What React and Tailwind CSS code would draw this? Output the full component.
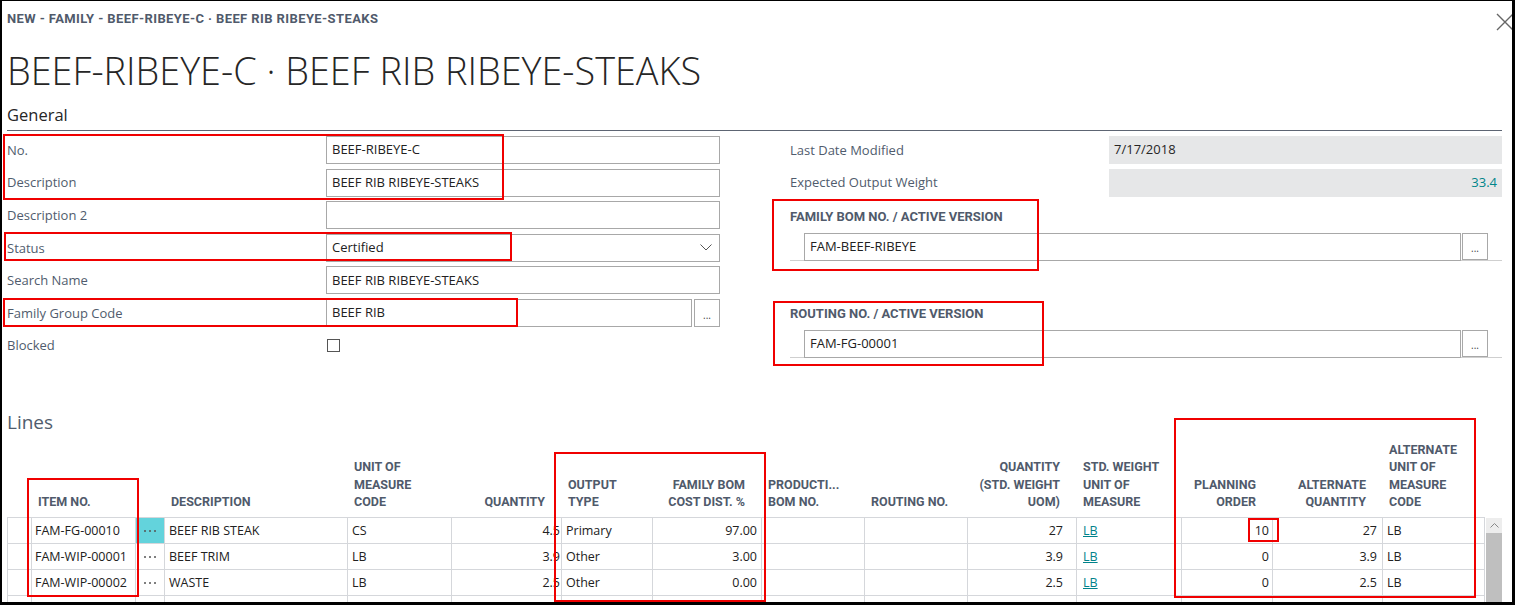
import React from "react";

const label = "text-[13px] text-[#505c6d] font-['Open_Sans',sans-serif]";
const din = "font-['Roboto',sans-serif] font-bold text-[#505a6b]";

const cols = [
  { w: "w-[25px]", h: [] },
  { w: "w-[104px]", h: ["ITEM NO."] },
  { w: "w-[29px]", h: [] },
  { w: "w-[183px]", h: ["DESCRIPTION"] },
  { w: "w-[104px]", h: ["UNIT OF", "MEASURE", "CODE"] },
  { w: "w-[110px]", h: ["QUANTITY"], right: true },
  { w: "w-[91px]", h: ["OUTPUT", "TYPE"] },
  { w: "w-[109px]", h: ["FAMILY BOM", "COST DIST. %"], right: true },
  { w: "w-[103px]", h: ["PRODUCTI...", "BOM NO."] },
  { w: "w-[103px]", h: ["ROUTING NO."] },
  { w: "w-[109px]", h: ["QUANTITY", "(STD. WEIGHT", "UOM)"], right: true },
  { w: "w-[105px]", h: ["STD. WEIGHT", "UNIT OF", "MEASURE"] },
  { w: "w-[91px]", h: ["PLANNING", "ORDER"], right: true },
  { w: "w-[110px]", h: ["ALTERNATE", "QUANTITY"], right: true },
  { w: "w-[102px]", h: ["ALTERNATE", "UNIT OF", "MEASURE", "CODE"] },
];

const rows = [
  ["FAM-FG-00010", "BEEF RIB STEAK", "CS", "4.5", "Primary", "97.00", "27", "10", "27", "LB"],
  ["FAM-WIP-00001", "BEEF TRIM", "LB", "3.9", "Other", "3.00", "3.9", "0", "3.9", "LB"],
  ["FAM-WIP-00002", "WASTE", "LB", "2.5", "Other", "0.00", "2.5", "0", "2.5", "LB"],
  ["", "", "", "", "", "", "", "", "", ""],
];

const redBoxes = [
  "left-[3px] top-[134px] w-[501px] h-[66px]",
  "left-[4px] top-[232px] w-[508px] h-[29px]",
  "left-[3px] top-[298px] w-[515px] h-[29px]",
  "left-[772px] top-[199px] w-[267px] h-[72px]",
  "left-[773px] top-[301px] w-[271px] h-[65px]",
  "left-[27px] top-[478px] w-[112px] h-[119px]",
  "left-[554px] top-[452px] w-[212px] h-[150px]",
  "left-[1174px] top-[418px] w-[302px] h-[180px]",
  "left-[1248px] top-[518px] w-[31px] h-[24px]",
];

function Input({ children, className = "" }) {
  return (
    <div
      className={`flex h-[28px] items-center border border-[#a8a8a8] bg-white pl-[5px] text-[13px] text-[#212121] font-['Open_Sans',sans-serif] ${className}`}
    >
      {children}
    </div>
  );
}

function DotsButton({ className = "" }) {
  return (
    <div
      className={`flex w-[26px] items-end justify-center border border-[#a8a8a8] bg-white pb-[6px] text-[10px] leading-none text-[#444] ${className}`}
    >
      ...
    </div>
  );
}

function Row({ name, children }) {
  return (
    <div className="flex h-[28px] items-center">
      <div className={`w-[319px] pt-px ${label}`}>{name}</div>
      <div className="flex w-[394px]">{children}</div>
    </div>
  );
}

function Cell({ w, className = "", children }) {
  return (
    <div
      className={`${w} flex h-full shrink-0 items-center overflow-hidden whitespace-nowrap border-r border-[#d5d7db] pt-px text-[12.5px] text-[#212121] ${className}`}
    >
      {children}
    </div>
  );
}

export default function App() {
  return (
    <div className="relative h-[605px] w-[1515px] font-['Open_Sans',sans-serif]">
      <div className="h-[605px] w-[1515px] overflow-hidden border-b-[3px] border-l-2 border-r-[3px] border-t border-black bg-white pl-[5px]">
        {/* header */}
        <div className="flex h-[27px] items-start justify-between pt-[10px]">
          <div className={`h-[16px] text-[13px] leading-[16px] tracking-[0.4px] ${din}`}>
            NEW - FAMILY - BEEF-RIBEYE-C · BEEF RIB RIBEYE-STEAKS
          </div>
          <svg width="16" height="18" viewBox="0 0 16 18" className="mt-[2px]">
            <path d="M1 1 L17 17 M17 1 L1 17" stroke="#666" strokeWidth="1.4" />
          </svg>
        </div>
        <div className="mt-[19px] h-[48px] text-[37.8px] font-light leading-[48px] text-[#262626]">
          BEEF-RIBEYE-C · BEEF RIB RIBEYE-STEAKS
        </div>
        <div className="mt-[10px] h-[20px] text-[16.5px] leading-[20px] text-[#262626]">General</div>
        <div className="mr-[10px] mt-[5px] h-px bg-[#5d6573]" />

        {/* form */}
        <div className="flex h-[270px]">
          <div className="flex w-[713px] flex-col gap-[4.6px] pt-[5px]">
            <Row name="No.">
              <Input className="flex-1">BEEF-RIBEYE-C</Input>
            </Row>
            <Row name="Description">
              <Input className="flex-1">BEEF RIB RIBEYE-STEAKS</Input>
            </Row>
            <Row name="Description 2">
              <Input className="flex-1" />
            </Row>
            <Row name="Status">
              <Input className="flex-1 justify-between pr-[7px]">
                <span>Certified</span>
                <svg width="12" height="7" viewBox="0 0 12 7">
                  <path d="M0.5 0.5 L6 6 L11.5 0.5" fill="none" stroke="#555" strokeWidth="1" />
                </svg>
              </Input>
            </Row>
            <Row name="Search Name">
              <Input className="flex-1">BEEF RIB RIBEYE-STEAKS</Input>
            </Row>
            <Row name="Family Group Code">
              <Input className="flex-1">BEEF RIB</Input>
              <DotsButton className="ml-[2px] h-[28px]" />
            </Row>
            <Row name="Blocked">
              <div className="ml-px h-[13px] w-[13px] border border-[#555]" />
            </Row>
          </div>

          <div className="ml-[70px] flex w-[712px] flex-col pt-[5px]">
            <div className="flex h-[28px] items-center">
              <div className={`w-[319px] pt-px ${label}`}>Last Date Modified</div>
              <div className="flex h-[28px] flex-1 items-center bg-[#e6e7e8] pl-[5px] text-[13px] text-[#262626]">
                7/17/2018
              </div>
            </div>
            <div className="mt-[4.6px] flex h-[28px] items-center">
              <div className={`w-[319px] pt-px ${label}`}>Expected Output Weight</div>
              <div className="flex h-[28px] flex-1 items-center justify-end bg-[#e6e7e8] pr-[5px] text-[13px] text-[#00858a]">
                33.4
              </div>
            </div>

            <div className={`mt-[10px] h-[20px] text-[13px] leading-[20px] ${din}`}>
              FAMILY BOM NO. / ACTIVE VERSION
            </div>
            <div className="mt-[6px] flex h-[28px] border-b border-[#cfcfcf] pl-[14px] pr-[14px]">
              <Input className="h-[27px] flex-1 border-[#a8a8a8]">FAM-BEEF-RIBEYE</Input>
              <DotsButton className="ml-px h-[27px]" />
            </div>

            <div className={`mt-[43px] h-[20px] text-[13px] leading-[20px] ${din}`}>
              ROUTING NO. / ACTIVE VERSION
            </div>
            <div className="mt-[6px] flex h-[28px] border-b border-[#cfcfcf] pl-[14px] pr-[14px]">
              <Input className="h-[27px] flex-1">FAM-FG-00001</Input>
              <DotsButton className="ml-px h-[27px]" />
            </div>
          </div>
        </div>

        {/* lines */}
        <div className="mt-[8px] h-[26px] text-[19px] leading-[26px] text-[#505c6d]">Lines</div>

        <div className="flex h-[82px]">
          {cols.map((c, i) => (
            <div
              key={i}
              className={`${c.w} flex shrink-0 flex-col justify-end pb-[7px] text-[12.5px] leading-[17.2px] ${din} ${
                c.right ? "items-end pr-[17px]" : "items-start pl-[6px]"
              }`}
            >
              {c.h.map((t) => (
                <div key={t} className="whitespace-nowrap">
                  {t}
                </div>
              ))}
            </div>
          ))}
        </div>

        <div className="flex">
          <div className="w-[1478px] border-l border-t border-[#d5d7db]">
            {rows.map((r, i) => (
              <div key={i} className="flex h-[26px] border-b border-[#d5d7db]">
                <Cell w="w-[24px]" />
                <Cell w="w-[104px]" className="pl-[3px]">{r[0]}</Cell>
                <Cell
                  w="w-[29px]"
                  className={`justify-center gap-[3px] ${i === 0 ? "bg-[#63d3dc]" : ""}`}
                >
                  {i < 3 && (
                    <>
                      <span className="h-[2px] w-[2px] rounded-full bg-[#555]" />
                      <span className="h-[2px] w-[2px] rounded-full bg-[#555]" />
                      <span className="h-[2px] w-[2px] rounded-full bg-[#555]" />
                    </>
                  )}
                </Cell>
                <Cell w="w-[183px]" className="pl-[4px]">{r[1]}</Cell>
                <Cell w="w-[104px]" className="pl-[4px]">{r[2]}</Cell>
                <Cell w="w-[110px]" className="justify-end pr-px">{r[3]}</Cell>
                <Cell w="w-[91px]" className="pl-[4px]">{r[4]}</Cell>
                <Cell w="w-[109px]" className="justify-end pr-[4px]">{r[5]}</Cell>
                <Cell w="w-[103px]" />
                <Cell w="w-[103px]" />
                <Cell w="w-[109px]" className="justify-end pr-[13px]">{r[6]}</Cell>
                <Cell w="w-[105px]" className="pl-[6px]">
                  {r[9] && <span className="text-[#00828a] underline">{r[9]}</span>}
                </Cell>
                <Cell w="w-[91px]" className="justify-end pr-[3px]">{r[7]}</Cell>
                <Cell w="w-[110px]" className="justify-end pr-[5px]">{r[8]}</Cell>
                <Cell w="w-[102px]" className="pl-[4px]">{r[9]}</Cell>
              </div>
            ))}
          </div>
          <div className="ml-px mt-px flex w-[16px] flex-col">
            <div className="flex h-[15px] items-center justify-center bg-[#ededed]">
              <svg width="9" height="5" viewBox="0 0 9 5">
                <path d="M0.5 4.5 L4.5 0.5 L8.5 4.5" fill="none" stroke="#888" strokeWidth="1" />
              </svg>
            </div>
            <div className="h-[100px] bg-[#bfbfbf]" />
          </div>
        </div>
      </div>

      {/* annotation boxes */}
      {redBoxes.map((b) => (
        <div key={b} className={`pointer-events-none absolute border-2 border-[#f00000] ${b}`} />
      ))}
    </div>
  );
}
